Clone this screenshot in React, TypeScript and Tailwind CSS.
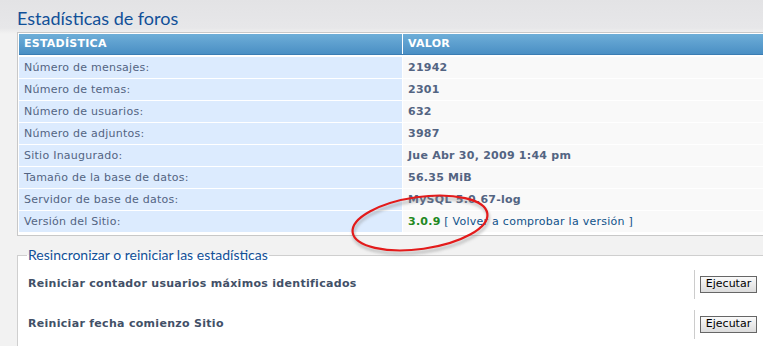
import React from "react";

const rows: [string, React.ReactNode][] = [
  ["Número de mensajes:", "21942"],
  ["Número de temas:", "2301"],
  ["Número de usuarios:", "632"],
  ["Número de adjuntos:", "3987"],
  ["Sitio Inaugurado:", "Jue Abr 30, 2009 1:44 pm"],
  ["Tamaño de la base de datos:", "56.35 MiB"],
  ["Servidor de base de datos:", "MySQL 5.0.67-log"],
];

export default function App() {
  const font = { fontFamily: '"DejaVu Sans", Verdana, sans-serif' };
  const title = { fontFamily: 'Lato, "Trebuchet MS", sans-serif' };
  return (
    <div
      className="relative w-[763px] h-[346px] overflow-hidden bg-[linear-gradient(#e3e3e5_0px,#e7e7e9_28px,#f2f2f2_34px,#f2f2f2_100%)]"
      style={font}
    >
      <div className="pl-[17px] pt-[4px]">
        <h1 className="text-[18px] leading-[28px] text-[#115098]" style={title}>
          Estadísticas de foros
        </h1>
        <div className="w-[800px] border border-[#c8c8c8] bg-white pt-px px-px pb-[3px] tracking-[0.25px]">
          <div className="flex h-[21px] bg-[linear-gradient(#6eaed8,#4a8fc4)] border-b border-[#3b7db3] text-white text-[11px] font-bold uppercase">
            <div className="w-[383px] pl-[5px] leading-[20px]">Estadística</div>
            <div className="w-px bg-white" />
            <div className="flex-1 pl-[5px] leading-[20px]">Valor</div>
          </div>
          <div className="h-px" />
          {rows.map(([k, v]) => (
            <div key={k} className="flex h-[21px] mt-px text-[11px] leading-[21px]">
              <div className="w-[383px] pl-[5px] bg-[#dcebfe] text-[#536482]">{k}</div>
              <div className="w-px bg-white" />
              <div className="flex-1 pl-[5px] bg-[#f9f9f9] text-[#536482] font-bold">{v}</div>
            </div>
          ))}
          <div className="flex h-[21px] mt-px text-[11px] leading-[21px]">
            <div className="w-[383px] pl-[5px] bg-[#dcebfe] text-[#536482]">Versión del Sitio:</div>
            <div className="w-px bg-white" />
            <div className="flex-1 pl-[5px] bg-[#f9f9f9]">
              <span className="font-bold text-[#228822]">3.0.9</span>{" "}
              <span className="text-[#105289]">[ Volver a comprobar la versión ]</span>
            </div>
          </div>
        </div>
        <div className="mt-[19px] w-[800px] border border-[#cfcfcf] bg-white h-[120px] relative">
          <div
            className="absolute left-[9px] -top-[9px] px-px text-[14px] leading-[16px] text-[#115098] bg-[linear-gradient(transparent_8px,white_8px)]"
            style={title}
          >
            Resincronizar o reiniciar las estadísticas
          </div>
          <div className="pt-[14px]">
            {[
              "Reiniciar contador usuarios máximos identificados",
              "Reiniciar fecha comienzo Sitio",
            ].map((t) => (
              <div key={t} className="flex h-[40px]">
                <div className="w-[676px] pl-[10px] pt-[4px] text-[11px] font-bold text-[#425067] leading-[20px] tracking-[0.3px]">
                  {t}
                </div>
                <div className="border-l border-[#cccccc] h-[29px] pl-[5px]">
                  <button className="h-[17px] w-[57px] border border-[#666] bg-[linear-gradient(#fafafa,#dcdcdc)] text-[11px] leading-[14px] text-black">
                    Ejecutar
                  </button>
                </div>
              </div>
            ))}
          </div>
        </div>
      </div>
      <svg className="absolute left-0 top-0 pointer-events-none" width="763" height="346">
        <defs>
          <filter id="sh" x="-20%" y="-30%" width="140%" height="160%">
            <feGaussianBlur stdDeviation="1.6" />
          </filter>
        </defs>
        <ellipse cx="421" cy="226" rx="68" ry="26" transform="rotate(-8 421 226)" fill="none" stroke="#888" strokeWidth="2.5" opacity="0.55" filter="url(#sh)" />
        <ellipse cx="420" cy="223" rx="68" ry="26" transform="rotate(-8 420 223)" fill="none" stroke="#e31b1b" strokeWidth="2.2" />
      </svg>
    </div>
  );
}
